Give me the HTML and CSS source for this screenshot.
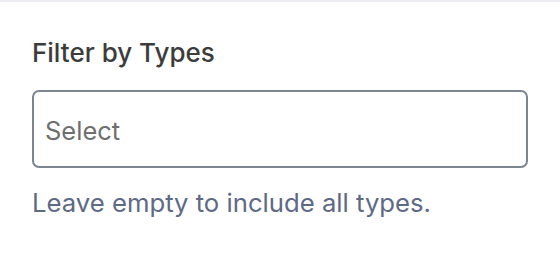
FILE: index.html
```html
<!DOCTYPE html>
<html>
<head>
<meta charset="utf-8">
<link rel="stylesheet" href="styles.css">
</head>
<body>
<div class="panel">
  <div class="field">
    <label class="label">Filter by Types</label>
    <div class="select"><span class="placeholder">Select</span></div>
    <p class="help">Leave empty to include all types.</p>
  </div>
</div>
</body>
</html>
```
FILE: styles.css
```css
html, body { margin: 0; padding: 0; background: #fff; }
body { font-family: Inter, "Noto Sans", sans-serif; width: 560px; height: 254px; overflow: hidden; }
.panel { border-top: 2px solid #ebebf0; padding: 35px 32px 0 32px; }
.field { display: flex; flex-direction: column; }
.label { font-size: 26px; font-weight: 500; color: #3c3c3c; line-height: 32px; }
.select {
  margin-top: 21px;
  height: 72px;
  border: 2px solid #7c8590;
  border-radius: 7px;
  display: flex;
  align-items: center;
  padding: 2px 11px 0 11px;
  box-sizing: content-box;
}
.placeholder { font-size: 25.5px; color: #6f6f6f; }
.help { margin: 19px 0 0 0; font-size: 25.7px; line-height: 32px; color: #5d6985; }
```
